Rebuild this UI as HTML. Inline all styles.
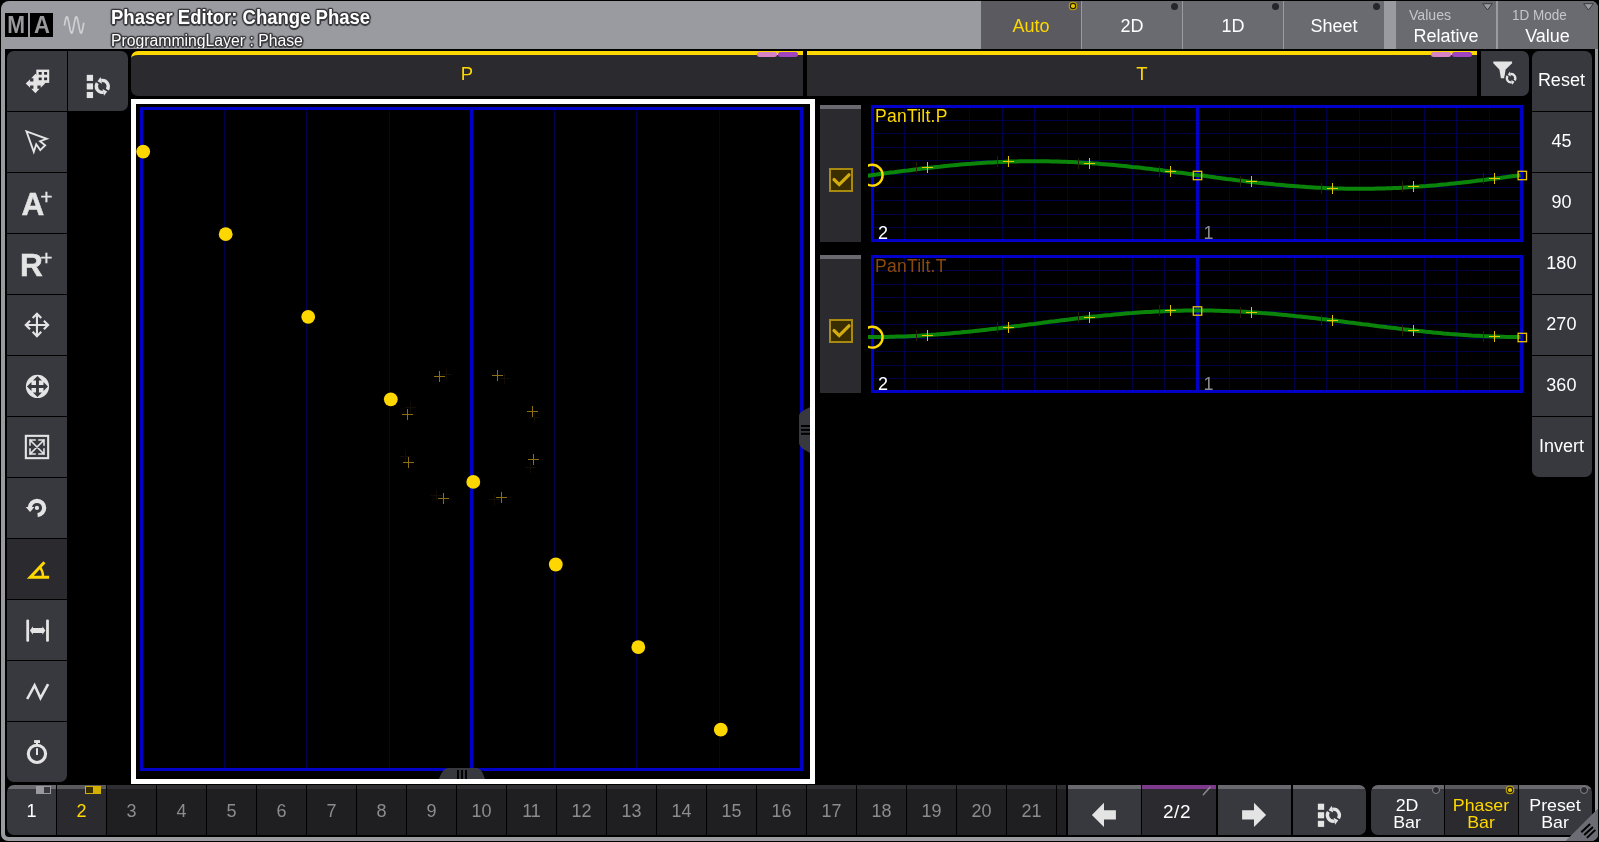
<!DOCTYPE html><html><head><meta charset="utf-8"><title>Phaser Editor</title><style>
*{box-sizing:border-box;margin:0;padding:0}
html,body{width:1599px;height:842px;overflow:hidden;background:#000}
body{position:relative;-webkit-font-smoothing:antialiased;font-family:"Liberation Sans",sans-serif;color:#fff}
.a{position:absolute}
#frame{left:1px;top:1px;width:1597px;height:840px;background:#9a9ba0;border-radius:8px 7px 7px 7px}
#inner{left:5px;top:49px;width:1589.6px;height:788px;background:#000;border-radius:0 0 0 4px}
.tbtn{left:7px;width:60px;height:60px;background:#38383f}
.rbtn{left:1532.4px;width:60px;height:60px;background:#38383f;font-size:18px;text-align:center;line-height:58px;color:#fff;padding-right:2px}
.top{top:1px;height:48px;background:#6a6a71;font-size:18px;text-align:center;color:#fff;line-height:50px}
.dot{position:absolute;right:4px;top:1.5px;width:7px;height:7px;border-radius:50%;background:#26262a}
.dota{position:absolute;right:6.2px;top:3.2px;width:3.6px;height:3.6px;border-radius:50%;background:#e2c400;box-shadow:0 0 0 1.2px #2c2400,0 0 0 2.3px #bfa010}
.cell{top:785px;height:50px;width:49px;--t:#2e2e32;--b:#1f1f22;background:linear-gradient(var(--t) 0 4px,var(--b) 4px);color:#8c8c90;font-size:18px;text-align:center;line-height:52px}
.bb{top:785px;height:50px;--t:#69696f;--b:#38383f;background:linear-gradient(var(--t) 0 4px,var(--b) 4px);text-align:center}
svg{position:absolute;overflow:visible}
.hdr{top:51px;height:45px;background:#2a2a2f;border-top:4px solid #ffd800;color:#ffd800;font-size:18.5px;text-align:center;line-height:37px}
</style></head><body>
<div id="root" class="a" style="left:0;top:0;width:1599px;height:842px;will-change:transform">
<div id="frame" class="a"></div><div id="inner" class="a"></div>
<div class="a" style="left:5px;top:13px;width:23px;height:24px;background:#000;color:#9a9a9e;font-weight:bold;font-size:24.5px;line-height:24px;text-align:center"><span style="display:inline-block;transform:scaleX(0.87)">M</span></div>
<div class="a" style="left:30px;top:13px;width:23px;height:24px;background:#000;color:#9a9a9e;font-weight:bold;font-size:24.5px;line-height:24px;text-align:center"><span style="display:inline-block;transform:scaleX(0.9)">A</span></div>
<svg style="left:0;top:0" width="100" height="50" viewBox="0 0 100 50"><polyline points="64.5,24.90 64.9,22.74 65.3,20.74 65.7,19.03 66.1,17.73 66.5,16.94 66.9,16.70 67.3,17.04 67.7,17.94 68.1,19.32 68.5,21.10 68.9,23.14 69.3,25.31 69.7,27.45 70.1,29.41 70.5,31.05 70.9,32.26 71.3,32.95 71.7,33.08 72.1,32.63 72.5,31.64 72.9,30.17 73.3,28.33 73.7,26.26 74.1,24.08 74.5,21.97 74.9,20.06 75.3,18.49 75.7,17.37 76.1,16.78 76.5,16.76 76.9,17.32 77.3,18.40 77.7,19.95 78.1,21.84 78.5,23.95 78.9,26.12 79.3,28.21 79.7,30.07 80.1,31.56 80.5,32.58 80.9,33.07 81.3,32.98 81.7,32.32 82.1,31.14 82.5,29.52 82.9,27.58 83.3,25.44 83.7,23.28" fill="none" stroke="#d0d0d2" stroke-width="1.7" stroke-linecap="round" stroke-linejoin="round"/></svg>
<div class="a" style="left:0;top:0;width:980px;height:48px;overflow:hidden"><div class="a" id="t1" style="left:111px;top:7px;font-size:20px;line-height:20px;font-weight:bold;color:#fff;white-space:nowrap;transform:scaleX(0.925);transform-origin:0 0;text-shadow:0 0 1.5px #38383c,0 0 1.5px #38383c,1px 1px 1px #38383c,-1px -1px 1px #38383c,1px -1px 1px #38383c,-1px 1px 1px #38383c,0 1.5px 1px #38383c,0 -1.5px 1px #38383c,1.5px 0 1px #38383c,-1.5px 0 1px #38383c">Phaser Editor: Change Phase</div><div class="a" id="t2" style="left:111px;top:32.5px;font-size:16px;line-height:16px;color:#fff;white-space:nowrap;transform:scaleX(0.985);transform-origin:0 0;text-shadow:0 0 1.5px #38383c,0 0 1.5px #38383c,1px 1px 1px #38383c,-1px -1px 1px #38383c,1px -1px 1px #38383c,-1px 1px 1px #38383c,0 1.5px 1px #38383c,0 -1.5px 1px #38383c,1.5px 0 1px #38383c,-1.5px 0 1px #38383c">ProgrammingLayer : Phase</div></div>
<div class="a top" style="left:981px;width:100px;background:#5a5a60;color:#ffd800">Auto<span class="dota"></span></div>
<div class="a top" style="left:1082px;width:100px;background:#6a6a71;color:#fff">2D<span class="dot"></span></div>
<div class="a top" style="left:1183px;width:100px;background:#6a6a71;color:#fff">1D<span class="dot"></span></div>
<div class="a top" style="left:1284px;width:100px;background:#6a6a71;color:#fff">Sheet<span class="dot"></span></div>
<div class="a top" style="left:1396px;width:100px;line-height:normal"><div style="position:absolute;left:12.5px;top:5px;font-size:15px;color:#c6c6ca;transform:scaleX(0.94);transform-origin:0 0">Values</div><div style="position:absolute;left:0;right:0;top:25px;font-size:18px">Relative</div><svg style="right:3px;top:2px" width="11" height="8" viewBox="0 0 11 8"><path d="M0.7 0.7 L10.3 0.7 L5.5 7 Z" fill="#9a9a9e" stroke="#3a3a3e" stroke-width="1"/></svg></div>
<div class="a top" style="left:1498px;width:100px;line-height:normal;border-radius:0 7px 0 0"><div style="position:absolute;left:13.5px;top:5px;font-size:15px;color:#c6c6ca;transform:scaleX(0.9);transform-origin:0 0">1D Mode</div><div style="position:absolute;left:0;right:1px;top:25px;font-size:18px">Value</div><svg style="right:4px;top:2px" width="11" height="8" viewBox="0 0 11 8"><path d="M0.7 0.7 L10.3 0.7 L5.5 7 Z" fill="#9a9a9e" stroke="#3a3a3e" stroke-width="1"/></svg></div>
<div class="a hdr" style="left:131px;width:672px;border-radius:7px 0 0 7px">P</div>
<div class="a hdr" style="left:807px;width:670px">T</div>
<div class="a" style="left:757px;top:52px;width:20px;height:5px;border-radius:3px;background:#d884c4"></div><div class="a" style="left:778px;top:52px;width:20px;height:5px;border-radius:3px;background:#a044c0"></div><div class="a" style="left:1431px;top:52px;width:20px;height:5px;border-radius:3px;background:#d884c4"></div><div class="a" style="left:1452px;top:52px;width:20px;height:5px;border-radius:3px;background:#a044c0"></div>
<div class="a" style="left:1481px;top:51px;width:48px;height:45px;background:#38383f;border-radius:0 7px 7px 0"></div>
<div class="a tbtn" style="top:51px;background:#38383f;border-radius:7px 0 0 0;"></div>
<div class="a tbtn" style="top:112px;background:#38383f;"></div>
<div class="a tbtn" style="top:173px;background:#38383f;"></div>
<div class="a tbtn" style="top:234px;background:#38383f;"></div>
<div class="a tbtn" style="top:295px;background:#38383f;"></div>
<div class="a tbtn" style="top:356px;background:#38383f;"></div>
<div class="a tbtn" style="top:417px;background:#38383f;"></div>
<div class="a tbtn" style="top:478px;background:#38383f;"></div>
<div class="a tbtn" style="top:539px;background:#2a2a2f;"></div>
<div class="a tbtn" style="top:600px;background:#38383f;"></div>
<div class="a tbtn" style="top:661px;background:#38383f;"></div>
<div class="a tbtn" style="top:722px;background:#38383f;border-radius:0 0 7px 7px;"></div>
<div class="a" style="left:68px;top:51px;width:60px;height:60px;background:#38383f;border-radius:0 7px 7px 0"></div>
<div class="a rbtn" style="top:51px;border-radius:7px 7px 0 0;">Reset</div>
<div class="a rbtn" style="top:112px;">45</div>
<div class="a rbtn" style="top:173px;">90</div>
<div class="a rbtn" style="top:234px;">180</div>
<div class="a rbtn" style="top:295px;">270</div>
<div class="a rbtn" style="top:356px;">360</div>
<div class="a rbtn" style="top:417px;border-radius:0 0 7px 7px;">Invert</div>
<div class="a cell" style="left:7px;--b:#38383f;--t:#69696f;color:#fff;border-radius:7px 0 0 7px;">1</div>
<div class="a cell" style="left:57px;--b:#2a2a2f;--t:#59595e;color:#ffd800;">2</div>
<div class="a cell" style="left:107px;">3</div>
<div class="a cell" style="left:157px;">4</div>
<div class="a cell" style="left:207px;">5</div>
<div class="a cell" style="left:257px;">6</div>
<div class="a cell" style="left:307px;">7</div>
<div class="a cell" style="left:357px;">8</div>
<div class="a cell" style="left:407px;">9</div>
<div class="a cell" style="left:457px;">10</div>
<div class="a cell" style="left:507px;">11</div>
<div class="a cell" style="left:557px;">12</div>
<div class="a cell" style="left:607px;">13</div>
<div class="a cell" style="left:657px;">14</div>
<div class="a cell" style="left:707px;">15</div>
<div class="a cell" style="left:757px;">16</div>
<div class="a cell" style="left:807px;">17</div>
<div class="a cell" style="left:857px;">18</div>
<div class="a cell" style="left:907px;">19</div>
<div class="a cell" style="left:957px;">20</div>
<div class="a cell" style="left:1007px;">21</div>
<div class="a" style="left:36px;top:786px;width:15px;height:8px;border:1px solid #9a9a9e;background:linear-gradient(90deg,#9a9a9e 0 7px,#38383f 7px)"></div>
<div class="a" style="left:85px;top:786px;width:16px;height:8px;border:1px solid #d4b000;background:linear-gradient(90deg,#3a2e00 0 7px,#d4b000 7px)"></div>
<div class="a cell" style="left:1057px;width:9px"></div>
<div class="a bb" style="left:1068px;width:73px"></div>
<div class="a bb" style="left:1142px;width:74px;--b:#2a2a2f;--t:#7d3a8c;font-size:19px;line-height:54px;padding-right:4px;letter-spacing:0.6px">2/2</div>
<div class="a bb" style="left:1218px;width:73px"></div>
<div class="a bb" style="left:1293px;width:73px;border-radius:0 7px 7px 0"></div>
<div class="a bb" style="left:1371px;width:73px;--b:#38383f;--t:#69696f;color:#fff;font-size:17px;line-height:17px;border-radius:7px 0 0 7px;"><div style="margin-top:11.9px;margin-right:1px;transform:scaleX(1.045)">2D<br>Bar</div><span class="dot" style="top:1px;right:4px;width:8px;height:8px;border:1px solid #85858a;background:#2a2a2f"></span></div>
<div class="a bb" style="left:1445px;width:73px;--b:#2a2a2f;--t:#59595e;color:#ffd800;font-size:17px;line-height:17px;"><div style="margin-top:11.9px;margin-right:1px;transform:scaleX(1.045)">Phaser<br>Bar</div><span class="dota" style="right:6.4px;top:3.2px"></span></div>
<div class="a bb" style="left:1519px;width:73px;--b:#38383f;--t:#69696f;color:#fff;font-size:17px;line-height:17px;border-radius:0 7px 7px 0;"><div style="margin-top:11.9px;margin-right:1px;transform:scaleX(1.045)">Preset<br>Bar</div><span class="dot" style="top:1px;right:4px;width:8px;height:8px;border:1px solid #85858a;background:#2a2a2f"></span></div>
<div class="a" style="left:131px;top:99px;width:684px;height:685px;border:5px solid #fff;background:#000"></div>
<svg style="left:0;top:0" width="1599" height="842" viewBox="0 0 1599 842"><rect x="224" y="110" width="1" height="658" fill="#00004c"/><rect x="306" y="110" width="1" height="658" fill="#00004c"/><rect x="389" y="110" width="1" height="658" fill="#00004c"/><rect x="554" y="110" width="1" height="658" fill="#00004c"/><rect x="636" y="110" width="1" height="658" fill="#00004c"/><rect x="719" y="110" width="1" height="658" fill="#00004c"/><rect x="141.5" y="108.5" width="660" height="661" fill="none" stroke="#0000c8" stroke-width="3" shape-rendering="crispEdges"/><rect x="470" y="110" width="3" height="658" fill="#0000c8"/><rect x="441" y="374" width="11" height="1" fill="#110d04"/><rect x="446" y="369" width="1" height="11" fill="#110d04"/><rect x="499" y="378" width="11" height="1" fill="#110d04"/><rect x="504" y="373" width="1" height="11" fill="#110d04"/><rect x="405" y="407" width="11" height="1" fill="#110d04"/><rect x="410" y="402" width="1" height="11" fill="#110d04"/><rect x="529" y="417" width="11" height="1" fill="#110d04"/><rect x="534" y="412" width="1" height="11" fill="#110d04"/><rect x="400" y="456" width="11" height="1" fill="#110d04"/><rect x="405" y="451" width="1" height="11" fill="#110d04"/><rect x="525" y="467" width="11" height="1" fill="#110d04"/><rect x="530" y="462" width="1" height="11" fill="#110d04"/><rect x="431" y="495" width="11" height="1" fill="#110d04"/><rect x="436" y="490" width="1" height="11" fill="#110d04"/><rect x="489" y="499" width="11" height="1" fill="#110d04"/><rect x="494" y="494" width="1" height="11" fill="#110d04"/><rect x="434" y="376" width="11" height="1" fill="#8c6e14"/><rect x="439" y="371" width="1" height="11" fill="#8c6e14"/><rect x="492" y="375" width="11" height="1" fill="#8c6e14"/><rect x="497" y="370" width="1" height="11" fill="#8c6e14"/><rect x="402" y="414" width="11" height="1" fill="#8c6e14"/><rect x="407" y="409" width="1" height="11" fill="#8c6e14"/><rect x="527" y="411" width="11" height="1" fill="#8c6e14"/><rect x="532" y="406" width="1" height="11" fill="#8c6e14"/><rect x="403" y="462" width="11" height="1" fill="#8c6e14"/><rect x="408" y="457" width="1" height="11" fill="#8c6e14"/><rect x="528" y="459" width="11" height="1" fill="#8c6e14"/><rect x="533" y="454" width="1" height="11" fill="#8c6e14"/><rect x="438" y="498" width="11" height="1" fill="#8c6e14"/><rect x="443" y="493" width="1" height="11" fill="#8c6e14"/><rect x="496" y="497" width="11" height="1" fill="#8c6e14"/><rect x="501" y="492" width="1" height="11" fill="#8c6e14"/><circle cx="143.2" cy="151.6" r="6.9" fill="#ffd700"/><circle cx="225.7" cy="234.2" r="6.9" fill="#ffd700"/><circle cx="308.2" cy="316.8" r="6.9" fill="#ffd700"/><circle cx="390.8" cy="399.3" r="6.9" fill="#ffd700"/><circle cx="473.3" cy="481.9" r="6.9" fill="#ffd700"/><circle cx="555.8" cy="564.5" r="6.9" fill="#ffd700"/><circle cx="638.3" cy="647.1" r="6.9" fill="#ffd700"/><circle cx="720.8" cy="729.7" r="6.9" fill="#ffd700"/></svg>
<div class="a" style="left:820px;top:105px;width:41px;height:137px;background:linear-gradient(#69696f 0 4px,#2a2a2f 4px)"></div><div class="a" style="left:829px;top:168px;width:24px;height:24px;background:#3a2e00;border:2px solid #a88a10"></div><svg style="left:829px;top:168px" width="24" height="24" viewBox="0 0 24 24"><path d="M5 11.5 L10.2 16.6 L20 6.8" fill="none" stroke="#d4ac10" stroke-width="3.2" stroke-linecap="round" stroke-linejoin="miter"/></svg><svg style="left:0;top:0" width="1599" height="842" viewBox="0 0 1599 842"><rect x="904" y="108" width="1" height="131" fill="#000046"/><rect x="937" y="108" width="1" height="131" fill="#000046"/><rect x="969" y="108" width="1" height="131" fill="#000046"/><rect x="1002" y="108" width="1" height="131" fill="#000046"/><rect x="1034" y="108" width="1" height="131" fill="#000046"/><rect x="1067" y="108" width="1" height="131" fill="#000046"/><rect x="1099" y="108" width="1" height="131" fill="#000046"/><rect x="1132" y="108" width="1" height="131" fill="#000046"/><rect x="1164" y="108" width="1" height="131" fill="#000046"/><rect x="1229" y="108" width="1" height="131" fill="#000046"/><rect x="1261" y="108" width="1" height="131" fill="#000046"/><rect x="1294" y="108" width="1" height="131" fill="#000046"/><rect x="1326" y="108" width="1" height="131" fill="#000046"/><rect x="1359" y="108" width="1" height="131" fill="#000046"/><rect x="1391" y="108" width="1" height="131" fill="#000046"/><rect x="1424" y="108" width="1" height="131" fill="#000046"/><rect x="1456" y="108" width="1" height="131" fill="#000046"/><rect x="1489" y="108" width="1" height="131" fill="#000046"/><rect x="874" y="120" width="646" height="1" fill="#000046"/><rect x="874" y="133" width="646" height="1" fill="#000046"/><rect x="874" y="147" width="646" height="1" fill="#000046"/><rect x="874" y="160" width="646" height="1" fill="#000046"/><rect x="874" y="174" width="646" height="1" fill="#000046"/><rect x="874" y="187" width="646" height="1" fill="#000046"/><rect x="874" y="200" width="646" height="1" fill="#000046"/><rect x="874" y="214" width="646" height="1" fill="#000046"/><rect x="874" y="227" width="646" height="1" fill="#000046"/><rect x="872.5" y="106.5" width="649" height="134" fill="none" stroke="#0000c8" stroke-width="3" shape-rendering="crispEdges"/><rect x="1196" y="108" width="3" height="131" fill="#0000c8"/><clipPath id="c105"><rect x="868" y="105" width="665" height="140"/></clipPath><g clip-path="url(#c105)"><polyline points="866.0,175.9 869.5,175.4 873.0,174.9 876.5,174.5 880.0,174.0 883.5,173.5 887.0,173.1 890.5,172.6 894.0,172.2 897.5,171.7 901.0,171.2 904.5,170.8 908.0,170.4 911.5,169.9 915.0,169.5 918.5,169.1 922.0,168.6 925.5,168.2 929.0,167.8 932.5,167.4 936.0,167.0 939.5,166.7 943.0,166.3 946.5,165.9 950.0,165.6 953.5,165.3 957.0,164.9 960.5,164.6 964.0,164.3 967.5,164.0 971.0,163.8 974.5,163.5 978.0,163.2 981.5,163.0 985.0,162.8 988.5,162.6 992.0,162.4 995.5,162.2 999.0,162.0 1002.5,161.9 1006.0,161.7 1009.5,161.6 1013.0,161.5 1016.5,161.4 1020.0,161.3 1023.5,161.3 1027.0,161.2 1030.5,161.2 1034.0,161.2 1037.5,161.2 1041.0,161.2 1044.5,161.3 1048.0,161.3 1051.5,161.4 1055.0,161.5 1058.5,161.6 1062.0,161.7 1065.5,161.8 1069.0,161.9 1072.5,162.1 1076.0,162.3 1079.5,162.5 1083.0,162.7 1086.5,162.9 1090.0,163.1 1093.5,163.4 1097.0,163.6 1100.5,163.9 1104.0,164.2 1107.5,164.5 1111.0,164.8 1114.5,165.1 1118.0,165.4 1121.5,165.8 1125.0,166.1 1128.5,166.5 1132.0,166.9 1135.5,167.2 1139.0,167.6 1142.5,168.0 1146.0,168.4 1149.5,168.8 1153.0,169.3 1156.5,169.7 1160.0,170.1 1163.5,170.6 1167.0,171.0 1170.5,171.5 1174.0,171.9 1177.5,172.4 1181.0,172.8 1184.5,173.3 1188.0,173.8 1191.5,174.2 1195.0,174.7 1198.5,175.2 1202.0,175.6 1205.5,176.1 1209.0,176.6 1212.5,177.0 1216.0,177.5 1219.5,177.9 1223.0,178.4 1226.5,178.9 1230.0,179.3 1233.5,179.7 1237.0,180.2 1240.5,180.6 1244.0,181.0 1247.5,181.4 1251.0,181.9 1254.5,182.3 1258.0,182.7 1261.5,183.0 1265.0,183.4 1268.5,183.8 1272.0,184.1 1275.5,184.5 1279.0,184.8 1282.5,185.1 1286.0,185.4 1289.5,185.7 1293.0,186.0 1296.5,186.3 1300.0,186.6 1303.5,186.8 1307.0,187.1 1310.5,187.3 1314.0,187.5 1317.5,187.7 1321.0,187.8 1324.5,188.0 1328.0,188.2 1331.5,188.3 1335.0,188.4 1338.5,188.5 1342.0,188.6 1345.5,188.7 1349.0,188.7 1352.5,188.8 1356.0,188.8 1359.5,188.8 1363.0,188.8 1366.5,188.8 1370.0,188.7 1373.5,188.7 1377.0,188.6 1380.5,188.5 1384.0,188.4 1387.5,188.3 1391.0,188.2 1394.5,188.0 1398.0,187.9 1401.5,187.7 1405.0,187.5 1408.5,187.3 1412.0,187.1 1415.5,186.8 1419.0,186.6 1422.5,186.3 1426.0,186.1 1429.5,185.8 1433.0,185.5 1436.5,185.2 1440.0,184.8 1443.5,184.5 1447.0,184.2 1450.5,183.8 1454.0,183.4 1457.5,183.1 1461.0,182.7 1464.5,182.3 1468.0,181.9 1471.5,181.5 1475.0,181.1 1478.5,180.6 1482.0,180.2 1485.5,179.8 1489.0,179.3 1492.5,178.9 1496.0,178.4 1499.5,178.0 1503.0,177.5 1506.5,177.1 1510.0,176.6 1513.5,176.1 1517.0,175.7 1520.5,175.2" fill="none" stroke="#0a850a" stroke-width="4"/><circle cx="872.2" cy="175.2" r="10.4" fill="none" stroke="#ffd800" stroke-width="2.4"/></g><rect x="916" y="162" width="1" height="11" fill="#242000"/><rect x="922" y="167" width="11" height="1" fill="#e6c400"/><rect x="927" y="162" width="1" height="11" fill="#e6c400"/><rect x="997" y="156" width="1" height="11" fill="#242000"/><rect x="1003" y="161" width="11" height="1" fill="#e6c400"/><rect x="1008" y="156" width="1" height="11" fill="#e6c400"/><rect x="1078" y="158" width="1" height="11" fill="#242000"/><rect x="1084" y="163" width="11" height="1" fill="#e6c400"/><rect x="1089" y="158" width="1" height="11" fill="#e6c400"/><rect x="1159" y="166" width="1" height="11" fill="#242000"/><rect x="1165" y="171" width="11" height="1" fill="#e6c400"/><rect x="1170" y="166" width="1" height="11" fill="#e6c400"/><rect x="1240" y="176" width="1" height="11" fill="#242000"/><rect x="1246" y="181" width="11" height="1" fill="#e6c400"/><rect x="1251" y="176" width="1" height="11" fill="#e6c400"/><rect x="1321" y="183" width="1" height="11" fill="#242000"/><rect x="1327" y="188" width="11" height="1" fill="#e6c400"/><rect x="1332" y="183" width="1" height="11" fill="#e6c400"/><rect x="1402" y="181" width="1" height="11" fill="#242000"/><rect x="1408" y="186" width="11" height="1" fill="#e6c400"/><rect x="1413" y="181" width="1" height="11" fill="#e6c400"/><rect x="1483" y="173" width="1" height="11" fill="#242000"/><rect x="1489" y="178" width="11" height="1" fill="#e6c400"/><rect x="1494" y="173" width="1" height="11" fill="#e6c400"/><rect x="1193.3" y="171.3" width="8.4" height="8.4" fill="none" stroke="#eec400" stroke-width="1.3"/><rect x="1518.1" y="171.3" width="8.4" height="8.4" fill="none" stroke="#eec400" stroke-width="1.3"/><text x="875" y="121.7" font-size="17.5" letter-spacing="0.25" fill="#ffd800">PanTilt.P</text><text x="878" y="238.7" font-size="18" fill="#fff">2</text><text x="1203.5" y="238.7" font-size="18" fill="#8c8c8c">1</text></svg>
<div class="a" style="left:820px;top:255px;width:41px;height:138px;background:linear-gradient(#69696f 0 4px,#2a2a2f 4px)"></div><div class="a" style="left:829px;top:319px;width:24px;height:24px;background:#3a2e00;border:2px solid #a88a10"></div><svg style="left:829px;top:319px" width="24" height="24" viewBox="0 0 24 24"><path d="M5 11.5 L10.2 16.6 L20 6.8" fill="none" stroke="#d4ac10" stroke-width="3.2" stroke-linecap="round" stroke-linejoin="miter"/></svg><svg style="left:0;top:0" width="1599" height="842" viewBox="0 0 1599 842"><rect x="904" y="258" width="1" height="132" fill="#000046"/><rect x="937" y="258" width="1" height="132" fill="#000046"/><rect x="969" y="258" width="1" height="132" fill="#000046"/><rect x="1002" y="258" width="1" height="132" fill="#000046"/><rect x="1034" y="258" width="1" height="132" fill="#000046"/><rect x="1067" y="258" width="1" height="132" fill="#000046"/><rect x="1099" y="258" width="1" height="132" fill="#000046"/><rect x="1132" y="258" width="1" height="132" fill="#000046"/><rect x="1164" y="258" width="1" height="132" fill="#000046"/><rect x="1229" y="258" width="1" height="132" fill="#000046"/><rect x="1261" y="258" width="1" height="132" fill="#000046"/><rect x="1294" y="258" width="1" height="132" fill="#000046"/><rect x="1326" y="258" width="1" height="132" fill="#000046"/><rect x="1359" y="258" width="1" height="132" fill="#000046"/><rect x="1391" y="258" width="1" height="132" fill="#000046"/><rect x="1424" y="258" width="1" height="132" fill="#000046"/><rect x="1456" y="258" width="1" height="132" fill="#000046"/><rect x="1489" y="258" width="1" height="132" fill="#000046"/><rect x="874" y="270" width="646" height="1" fill="#000046"/><rect x="874" y="284" width="646" height="1" fill="#000046"/><rect x="874" y="297" width="646" height="1" fill="#000046"/><rect x="874" y="311" width="646" height="1" fill="#000046"/><rect x="874" y="324" width="646" height="1" fill="#000046"/><rect x="874" y="338" width="646" height="1" fill="#000046"/><rect x="874" y="351" width="646" height="1" fill="#000046"/><rect x="874" y="365" width="646" height="1" fill="#000046"/><rect x="874" y="378" width="646" height="1" fill="#000046"/><rect x="872.5" y="256.5" width="649" height="135" fill="none" stroke="#0000c8" stroke-width="3" shape-rendering="crispEdges"/><rect x="1196" y="258" width="3" height="132" fill="#0000c8"/><clipPath id="c255"><rect x="868" y="255" width="665" height="140"/></clipPath><g clip-path="url(#c255)"><polyline points="866.0,337.0 869.5,337.0 873.0,337.0 876.5,337.0 880.0,337.0 883.5,336.9 887.0,336.9 890.5,336.8 894.0,336.7 897.5,336.6 901.0,336.5 904.5,336.4 908.0,336.2 911.5,336.1 915.0,335.9 918.5,335.7 922.0,335.5 925.5,335.3 929.0,335.1 932.5,334.8 936.0,334.6 939.5,334.3 943.0,334.0 946.5,333.7 950.0,333.4 953.5,333.1 957.0,332.8 960.5,332.5 964.0,332.1 967.5,331.8 971.0,331.4 974.5,331.1 978.0,330.7 981.5,330.3 985.0,329.9 988.5,329.5 992.0,329.1 995.5,328.7 999.0,328.3 1002.5,327.8 1006.0,327.4 1009.5,327.0 1013.0,326.5 1016.5,326.1 1020.0,325.7 1023.5,325.2 1027.0,324.8 1030.5,324.3 1034.0,323.9 1037.5,323.4 1041.0,323.0 1044.5,322.5 1048.0,322.1 1051.5,321.6 1055.0,321.2 1058.5,320.7 1062.0,320.3 1065.5,319.9 1069.0,319.5 1072.5,319.0 1076.0,318.6 1079.5,318.2 1083.0,317.8 1086.5,317.4 1090.0,317.0 1093.5,316.6 1097.0,316.3 1100.5,315.9 1104.0,315.5 1107.5,315.2 1111.0,314.9 1114.5,314.5 1118.0,314.2 1121.5,313.9 1125.0,313.6 1128.5,313.3 1132.0,313.1 1135.5,312.8 1139.0,312.5 1142.5,312.3 1146.0,312.1 1149.5,311.9 1153.0,311.7 1156.5,311.5 1160.0,311.4 1163.5,311.2 1167.0,311.1 1170.5,310.9 1174.0,310.8 1177.5,310.7 1181.0,310.7 1184.5,310.6 1188.0,310.6 1191.5,310.5 1195.0,310.5 1198.5,310.5 1202.0,310.5 1205.5,310.5 1209.0,310.6 1212.5,310.6 1216.0,310.7 1219.5,310.8 1223.0,310.9 1226.5,311.0 1230.0,311.2 1233.5,311.3 1237.0,311.5 1240.5,311.6 1244.0,311.8 1247.5,312.0 1251.0,312.3 1254.5,312.5 1258.0,312.7 1261.5,313.0 1265.0,313.2 1268.5,313.5 1272.0,313.8 1275.5,314.1 1279.0,314.4 1282.5,314.8 1286.0,315.1 1289.5,315.4 1293.0,315.8 1296.5,316.2 1300.0,316.5 1303.5,316.9 1307.0,317.3 1310.5,317.7 1314.0,318.1 1317.5,318.5 1321.0,318.9 1324.5,319.3 1328.0,319.8 1331.5,320.2 1335.0,320.6 1338.5,321.1 1342.0,321.5 1345.5,321.9 1349.0,322.4 1352.5,322.8 1356.0,323.3 1359.5,323.7 1363.0,324.2 1366.5,324.6 1370.0,325.1 1373.5,325.5 1377.0,326.0 1380.5,326.4 1384.0,326.8 1387.5,327.3 1391.0,327.7 1394.5,328.1 1398.0,328.6 1401.5,329.0 1405.0,329.4 1408.5,329.8 1412.0,330.2 1415.5,330.6 1419.0,330.9 1422.5,331.3 1426.0,331.7 1429.5,332.0 1433.0,332.4 1436.5,332.7 1440.0,333.0 1443.5,333.4 1447.0,333.7 1450.5,334.0 1454.0,334.2 1457.5,334.5 1461.0,334.8 1464.5,335.0 1468.0,335.2 1471.5,335.5 1475.0,335.7 1478.5,335.8 1482.0,336.0 1485.5,336.2 1489.0,336.3 1492.5,336.5 1496.0,336.6 1499.5,336.7 1503.0,336.8 1506.5,336.9 1510.0,336.9 1513.5,337.0 1517.0,337.0 1520.5,337.0" fill="none" stroke="#0a850a" stroke-width="4"/><circle cx="872.2" cy="337.2" r="10.4" fill="none" stroke="#ffd800" stroke-width="2.4"/></g><rect x="916" y="330" width="1" height="11" fill="#242000"/><rect x="922" y="335" width="11" height="1" fill="#e6c400"/><rect x="927" y="330" width="1" height="11" fill="#e6c400"/><rect x="997" y="322" width="1" height="11" fill="#242000"/><rect x="1003" y="327" width="11" height="1" fill="#e6c400"/><rect x="1008" y="322" width="1" height="11" fill="#e6c400"/><rect x="1078" y="312" width="1" height="11" fill="#242000"/><rect x="1084" y="317" width="11" height="1" fill="#e6c400"/><rect x="1089" y="312" width="1" height="11" fill="#e6c400"/><rect x="1159" y="305" width="1" height="11" fill="#242000"/><rect x="1165" y="310" width="11" height="1" fill="#e6c400"/><rect x="1170" y="305" width="1" height="11" fill="#e6c400"/><rect x="1240" y="307" width="1" height="11" fill="#242000"/><rect x="1246" y="312" width="11" height="1" fill="#e6c400"/><rect x="1251" y="307" width="1" height="11" fill="#e6c400"/><rect x="1321" y="315" width="1" height="11" fill="#242000"/><rect x="1327" y="320" width="11" height="1" fill="#e6c400"/><rect x="1332" y="315" width="1" height="11" fill="#e6c400"/><rect x="1402" y="325" width="1" height="11" fill="#242000"/><rect x="1408" y="330" width="11" height="1" fill="#e6c400"/><rect x="1413" y="325" width="1" height="11" fill="#e6c400"/><rect x="1483" y="331" width="1" height="11" fill="#242000"/><rect x="1489" y="336" width="11" height="1" fill="#e6c400"/><rect x="1494" y="331" width="1" height="11" fill="#e6c400"/><rect x="1193.3" y="306.8" width="8.4" height="8.4" fill="none" stroke="#eec400" stroke-width="1.3"/><rect x="1518.1" y="333.3" width="8.4" height="8.4" fill="none" stroke="#eec400" stroke-width="1.3"/><text x="875" y="271.7" font-size="17.5" letter-spacing="0.25" fill="#8a4a0c">PanTilt.T</text><text x="878" y="389.7" font-size="18" fill="#fff">2</text><text x="1203.5" y="389.7" font-size="18" fill="#8c8c8c">1</text></svg>
<svg style="left:0;top:0" width="1599" height="842" viewBox="0 0 1599 842"><polygon points="35.40,73.85 39.60,78.25 37.40,78.25 37.40,81.55 40.70,81.55 40.70,79.35 45.10,83.55 40.70,87.75 40.70,85.55 37.40,85.55 37.40,88.85 39.60,88.85 35.40,93.25 31.20,88.85 33.40,88.85 33.40,85.55 30.10,85.55 30.10,87.75 25.70,83.55 30.10,79.35 30.10,81.55 33.40,81.55 33.40,78.25 31.20,78.25" fill="#e4e4e4"/><rect x="36.3" y="69.6" width="12.9" height="13.3" fill="#e4e4e4"/><rect x="38.7" y="72.0" width="3" height="2.7" fill="#2c2c32"/><rect x="38.7" y="77.5" width="3" height="2.7" fill="#2c2c32"/><rect x="44.1" y="72.0" width="3" height="2.7" fill="#2c2c32"/><rect x="44.1" y="77.5" width="3" height="2.7" fill="#2c2c32"/><rect x="86.75" y="74.85" width="6.3" height="6.1" fill="#e4e4e4"/><rect x="86.75" y="83.35" width="6.3" height="6.1" fill="#e4e4e4"/><rect x="86.75" y="91.95" width="6.3" height="6.1" fill="#e4e4e4"/><g transform="translate(102.3,86.35) scale(1.0)"><g transform="rotate(0)"><path d="M5.03 3.27 A6 6 0 0 0 -1.04 -5.91" fill="none" stroke="#e4e4e4" stroke-width="3.3"/><polygon points="-4.86,-5.04 -1.67,-9.45 -0.27,-2.59" fill="#e4e4e4"/></g><g transform="rotate(180)"><path d="M5.03 3.27 A6 6 0 0 0 -1.04 -5.91" fill="none" stroke="#e4e4e4" stroke-width="3.3"/><polygon points="-4.86,-5.04 -1.67,-9.45 -0.27,-2.59" fill="#e4e4e4"/></g></g><polygon transform="translate(36.7 141.6) scale(0.94) translate(-36.7 -141.6)" points="25.8,130.7 47.4,138.6 40.3,141.2 45.7,145.5 40.5,150.7 36.2,144.5 33.6,152.4" fill="none" stroke="#e4e4e4" stroke-width="2" stroke-linejoin="miter"/><path d="M25.750000000000004 324.95H48.150000000000006M36.95 313.75V336.15M32.650000000000006 318.05L36.95 313.75L41.25 318.05M32.650000000000006 331.84999999999997L36.95 336.15L41.25 331.84999999999997M30.050000000000004 320.65L25.750000000000004 324.95L30.050000000000004 329.25M43.85000000000001 320.65L48.150000000000006 324.95L43.85000000000001 329.25" fill="none" stroke="#e4e4e4" stroke-width="2.1" stroke-linejoin="miter"/><circle cx="37.47" cy="386.47" r="11.6" fill="#e4e4e4"/><polygon points="37.47,375.97 41.97,380.47 38.92,380.47 38.92,385.02 43.47,385.02 43.47,381.97 47.97,386.47 43.47,390.97 43.47,387.92 38.92,387.92 38.92,392.47 41.97,392.47 37.47,396.97 32.97,392.47 36.02,392.47 36.02,387.92 31.47,387.92 31.47,390.97 26.97,386.47 31.47,381.97 31.47,385.02 36.02,385.02 36.02,380.47 32.97,380.47" fill="#38383f"/><rect x="25.85" y="435.85" width="22.3" height="22.3" fill="none" stroke="#e4e4e4" stroke-width="2.1"/><path d="M30.0 440.0L44.0 454.0M30.0 454.0L44.0 440.0M30.0 445.0V440.0H35.0M39.0 440.0H44.0V445.0M44.0 449.0V454.0H39.0M35.0 454.0H30.0V449.0" fill="none" stroke="#e4e4e4" stroke-width="1.6" stroke-linejoin="miter" stroke-linecap="square"/><path d="M37.6 515.1 A7.15 7.15 0 1 0 29.85 507.6" fill="none" stroke="#e4e4e4" stroke-width="4.2"/><polygon points="25.7,507.1 34.4,507.1 30.1,511.9" fill="#e4e4e4"/><circle cx="36.95" cy="507.95" r="2.1" fill="#e4e4e4"/><path d="M49.1 577.2H30.3L44.4 562.3" fill="none" stroke="#ffd800" stroke-width="3.0" stroke-linejoin="miter"/><path d="M43.0 577.1A16.5 16.5 0 0 0 39.3 566.3" fill="none" stroke="#ffd800" stroke-width="2.5"/><rect x="26.3" y="619.5" width="2.8" height="22.3" rx="1.2" fill="#e4e4e4"/><rect x="46.1" y="619.5" width="2.8" height="22.3" rx="1.2" fill="#e4e4e4"/><polygon points="29.9,630.5 32.9,626.2 32.9,628.1 42.4,628.1 42.4,626.2 45.4,630.5 42.4,634.8 42.4,632.9 32.9,632.9 32.9,634.8" fill="#e4e4e4"/><polyline points="27.2,699 34.6,685.3 40.5,698.1 48.1,684.2" fill="none" stroke="#e4e4e4" stroke-width="2.6" stroke-linejoin="miter"/><circle cx="36.95" cy="753.85" r="8.65" fill="none" stroke="#e4e4e4" stroke-width="3.1"/><rect x="36" y="748.2" width="2" height="6.8" fill="#e4e4e4"/><rect x="34.1" y="740.1" width="5.9" height="2.9" fill="#e4e4e4"/><rect x="36" y="742.9" width="2" height="2" fill="#e4e4e4"/><polygon points="1493.3,61.6 1512.1,61.6 1512.1,63.2 1505.6,69.6 1504.3,78.2 1500.9,78.2 1499.4,69.6 1493.3,63.2" fill="#e4e4e4"/><circle cx="1511.1" cy="78.2" r="6.6" fill="#38383f"/><g transform="translate(1511.1,78.2) scale(0.7)"><g transform="rotate(0)"><path d="M5.03 3.27 A6 6 0 0 0 -1.04 -5.91" fill="none" stroke="#e4e4e4" stroke-width="3.3"/><polygon points="-4.86,-5.04 -1.67,-9.45 -0.27,-2.59" fill="#e4e4e4"/></g><g transform="rotate(180)"><path d="M5.03 3.27 A6 6 0 0 0 -1.04 -5.91" fill="none" stroke="#e4e4e4" stroke-width="3.3"/><polygon points="-4.86,-5.04 -1.67,-9.45 -0.27,-2.59" fill="#e4e4e4"/></g></g><polygon points="1091.9,814.9 1104,802.8 1104,810.2 1115.9,810.2 1115.9,819.6 1104,819.6 1104,827.1" fill="#e4e4e4"/><polygon points="1266.1,814.9 1254,802.8 1254,810.2 1242.1,810.2 1242.1,819.6 1254,819.6 1254,827.1" fill="#e4e4e4"/><rect x="1317.85" y="803.70" width="6.3" height="6.1" fill="#e4e4e4"/><rect x="1317.85" y="812.20" width="6.3" height="6.1" fill="#e4e4e4"/><rect x="1317.85" y="820.80" width="6.3" height="6.1" fill="#e4e4e4"/><g transform="translate(1333.4,815.2) scale(1.0)"><g transform="rotate(0)"><path d="M5.03 3.27 A6 6 0 0 0 -1.04 -5.91" fill="none" stroke="#e4e4e4" stroke-width="3.3"/><polygon points="-4.86,-5.04 -1.67,-9.45 -0.27,-2.59" fill="#e4e4e4"/></g><g transform="rotate(180)"><path d="M5.03 3.27 A6 6 0 0 0 -1.04 -5.91" fill="none" stroke="#e4e4e4" stroke-width="3.3"/><polygon points="-4.86,-5.04 -1.67,-9.45 -0.27,-2.59" fill="#e4e4e4"/></g></g></svg>
<div class="a" style="left:21.5px;top:186px;font-size:31.5px;font-weight:bold;color:#e4e4e4;line-height:36px;-webkit-text-stroke:0.5px #e4e4e4">A</div><div class="a" style="left:40.2px;top:185px;font-size:21px;color:#e4e4e4;line-height:24px;-webkit-text-stroke:0.3px #e4e4e4">+</div>
<div class="a" style="left:20px;top:247px;font-size:31.5px;font-weight:bold;color:#e4e4e4;line-height:36px;-webkit-text-stroke:0.5px #e4e4e4">R</div><div class="a" style="left:40.2px;top:246px;font-size:21px;color:#e4e4e4;line-height:24px;-webkit-text-stroke:0.3px #e4e4e4">+</div>
<svg style="left:0;top:0" width="1599" height="842" viewBox="0 0 1599 842"><path d="M439 779 C440.5 774.5 443.5 768 449 768 H476 C481.5 768 483.5 774.5 485 779 Z" fill="#38383f"/><rect x="457" y="770" width="1.9" height="9" fill="#000"/><rect x="461.1" y="770" width="1.9" height="9" fill="#000"/><rect x="465.1" y="770" width="1.9" height="9" fill="#000"/><path d="M810 407 C806 409.5 799 411 799 416.5 V442.5 C799 448 806 450.5 810 453 Z" fill="#38383f"/><rect x="801" y="425" width="9" height="2" fill="#000"/><rect x="801" y="428.9" width="9" height="2" fill="#000"/><rect x="801" y="432.8" width="9" height="2" fill="#000"/><path d="M1565.5 841 L1598 808.5 V834 A7 7 0 0 1 1591 841 Z" fill="#6c6c74"/><path d="M1581.3 832.2L1590.1 824.1M1584.2 834.9L1593 826.9M1586.9 837.9L1595.3 829.9" stroke="#000" stroke-width="2" fill="none"/><path d="M1203.3 794.7L1210 787.3" stroke="#8c8c8c" stroke-width="1.5" fill="none" stroke-linecap="round"/></svg>
</div></body></html>
